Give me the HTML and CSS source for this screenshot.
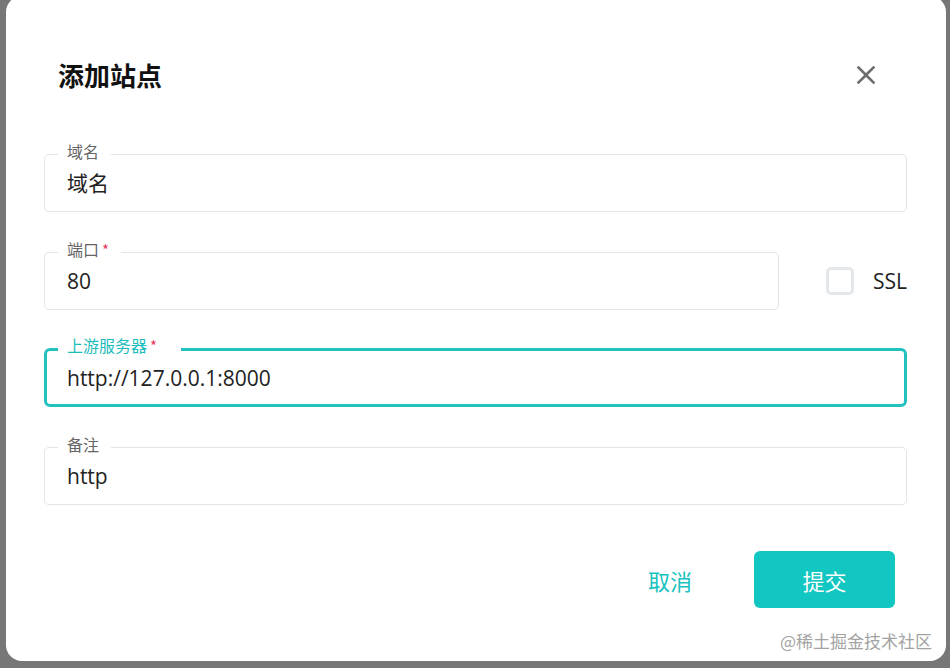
FILE: index.html
```html
<!DOCTYPE html>
<html lang="zh-CN">
<head>
<meta charset="utf-8">
<title>添加站点</title>
<link rel="stylesheet" href="styles.css">
</head>
<body>
<div class="dialog">
  <div class="header">
    <h2 class="title">添加站点</h2>
    <svg class="close" viewBox="0 0 24 24" width="32" height="32" aria-hidden="true"><path d="M19 6.41 17.59 5 12 10.59 6.41 5 5 6.41 10.59 12 5 17.59 6.41 19 12 13.41 17.59 19 19 17.59 13.41 12z"/></svg>
  </div>
  <div class="form">
    <div class="field f1">
      <span class="label">域名</span>
      <span class="value">域名</span>
    </div>
    <div class="row">
      <div class="field f2">
        <span class="label">端口<span class="req">*</span></span>
        <span class="value">80</span>
      </div>
      <div class="check">
        <span class="box"></span>
        <span class="check-text">SSL</span>
      </div>
    </div>
    <div class="field f3 focused">
      <span class="label">上游服务器<span class="req">*</span></span>
      <span class="value">http://127.0.0.1:8000</span>
    </div>
    <div class="field f4">
      <span class="label">备注</span>
      <span class="value">http</span>
    </div>
  </div>
  <div class="actions">
    <button class="btn btn-text">取消</button>
    <button class="btn btn-primary">提交</button>
  </div>
  <div class="watermark">@稀土掘金技术社区</div>
</div>
</body>
</html>
```

FILE: styles.css
```css
html, body {
  margin: 0;
  padding: 0;
}
body {
  background: #777777;
  width: 950px;
  height: 668px;
  overflow: hidden;
  font-family: "Open Sans", "Noto Sans CJK SC", sans-serif;
  color: #222;
}
.dialog {
  position: relative;
  box-sizing: border-box;
  margin: -4px 0 0 6px;
  width: 940px;
  height: 665px;
  background: #fff;
  border-radius: 16px;
  padding: 0 39px 0 38px;
}
.header {
  display: flex;
  align-items: center;
  justify-content: space-between;
  padding-top: 64px;
  height: 30px;
}
.title {
  margin: 0 0 0 14px;
  font-family: "Noto Sans CJK SC", sans-serif;
  font-size: 26px;
  line-height: 30px;
  font-weight: 700;
  color: #111;
}
.close {
  fill: #6e6e6e;
  margin-right: 25px;
}
.form {
  display: flex;
  flex-direction: column;
  margin-top: 64px;
}
.row {
  display: flex;
  align-items: center;
  margin-top: 40px;
}
.field {
  position: relative;
  box-sizing: border-box;
  height: 58px;
  border: 1px solid #e4e4e4;
  border-radius: 5px;
  padding-left: 22px;
  display: flex;
  align-items: center;
}
.f2 {
  flex: 1;
}
.f3 {
  margin-top: 38px;
  height: 59px;
}
.f4 {
  margin-top: 40px;
}
.focused {
  border: 3px solid #22c0bf;
  border-radius: 6px;
  padding-left: 20px;
}
.label {
  position: absolute;
  top: -13px;
  left: 13px;
  padding: 0 12px 0 9px;
  background: #fff;
  font-family: "Noto Sans CJK SC", sans-serif;
  font-size: 16px;
  line-height: 18px;
  color: #666;
}
.focused .label {
  top: -15px;
  left: 11px;
  color: #1cbcbc;
  padding-right: 24px;
}
.req {
  color: #ec3a63;
  margin-left: 3px;
  font-size: 15px;
}
.value {
  font-size: 21px;
  line-height: 28px;
  color: #222;
}
.check {
  display: flex;
  align-items: center;
  margin-left: 47px;
}
.box {
  box-sizing: border-box;
  width: 28px;
  height: 28px;
  border: 3px solid #e5e8eb;
  border-radius: 5px;
}
.check-text {
  margin-left: 19px;
  font-size: 21px;
  line-height: 28px;
  color: #222;
}
.actions {
  display: flex;
  justify-content: flex-end;
  align-items: center;
  margin-top: 46px;
  padding-right: 12px;
}
.btn {
  font-family: "Noto Sans CJK SC", sans-serif;
  font-size: 22px;
  font-weight: 400;
  border: none;
  border-radius: 6px;
  height: 57px;
  cursor: pointer;
}
.btn-text {
  background: transparent;
  color: #18c2bf;
  width: 100px;
  margin-right: 34px;
}
.btn-primary {
  background: #12c6c1;
  color: #fff;
  width: 141px;
}
.watermark {
  position: absolute;
  right: 14px;
  bottom: 10px;
  font-family: "Noto Sans CJK SC", sans-serif;
  font-size: 17px;
  line-height: 20px;
  color: #a3a3a3;
}
```
